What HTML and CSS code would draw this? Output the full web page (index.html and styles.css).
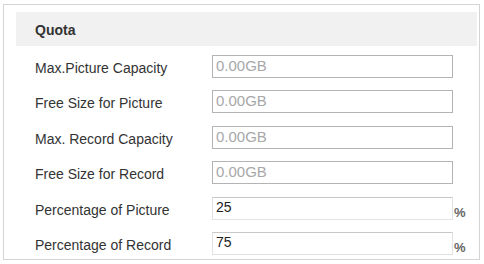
FILE: index.html
```html
<!DOCTYPE html>
<html>
<head>
<meta charset="utf-8">
<link rel="stylesheet" href="styles.css">
</head>
<body>
<div class="panel">
  <div class="header">Quota</div>
  <div class="rows">
    <div class="row">
      <span class="label">Max.Picture Capacity</span>
      <input class="field disabled" type="text" value="0.00GB" disabled>
    </div>
    <div class="row">
      <span class="label">Free Size for Picture</span>
      <input class="field disabled" type="text" value="0.00GB" disabled>
    </div>
    <div class="row">
      <span class="label">Max. Record Capacity</span>
      <input class="field disabled" type="text" value="0.00GB" disabled>
    </div>
    <div class="row">
      <span class="label">Free Size for Record</span>
      <input class="field disabled" type="text" value="0.00GB" disabled>
    </div>
    <div class="row">
      <span class="label">Percentage of Picture</span>
      <input class="field editable" type="text" value="25">
      <span class="unit">%</span>
    </div>
    <div class="row">
      <span class="label">Percentage of Record</span>
      <input class="field editable" type="text" value="75">
      <span class="unit">%</span>
    </div>
  </div>
</div>
</body>
</html>
```

FILE: styles.css
```css
html, body {
  margin: 0;
  padding: 0;
  background: #ffffff;
}

body {
  font-family: "Liberation Sans", Arial, sans-serif;
  font-size: 14px;
  color: #333333;
}

.panel {
  margin: 4px 3px 0 3px;
  width: 477px;
  height: 256px;
  border: 1px solid #d4d4d4;
  padding: 7px 2px 0 12px;
  box-sizing: border-box;
}

.header {
  height: 34px;
  background: #f1f1f1;
  font-weight: bold;
  font-size: 14px;
  color: #333333;
  padding-left: 19px;
  line-height: 36px;
}

.rows {
  display: flex;
  flex-direction: column;
  padding-top: 9px;
  padding-left: 19px;
}

.row {
  display: flex;
  height: 35.4px;
  align-items: flex-start;
}

.label {
  width: 177px;
  padding-top: 5px;
  color: #333333;
  white-space: nowrap;
}

.field {
  box-sizing: border-box;
  width: 241px;
  height: 23px;
  margin: 0;
  padding: 0 0 2px 3px;
  font-family: "Liberation Sans", Arial, sans-serif;
  font-size: 14px;
  outline: none;
}

.field.disabled {
  border: 1px solid #b4b4b4;
  background: #ffffff;
  font-size: 15px;
  color: #a8a8a8;
  -webkit-text-fill-color: #a8a8a8;
  opacity: 1;
}

.field.editable {
  border: 1px solid #e2e2e2;
  border-top-color: #c8c8c8;
  background: #ffffff;
  color: #222222;
  padding-left: 3px;
}

.unit {
  padding-top: 8px;
  padding-left: 1px;
  font-size: 13px;
  font-weight: bold;
  color: #666666;
}
```
